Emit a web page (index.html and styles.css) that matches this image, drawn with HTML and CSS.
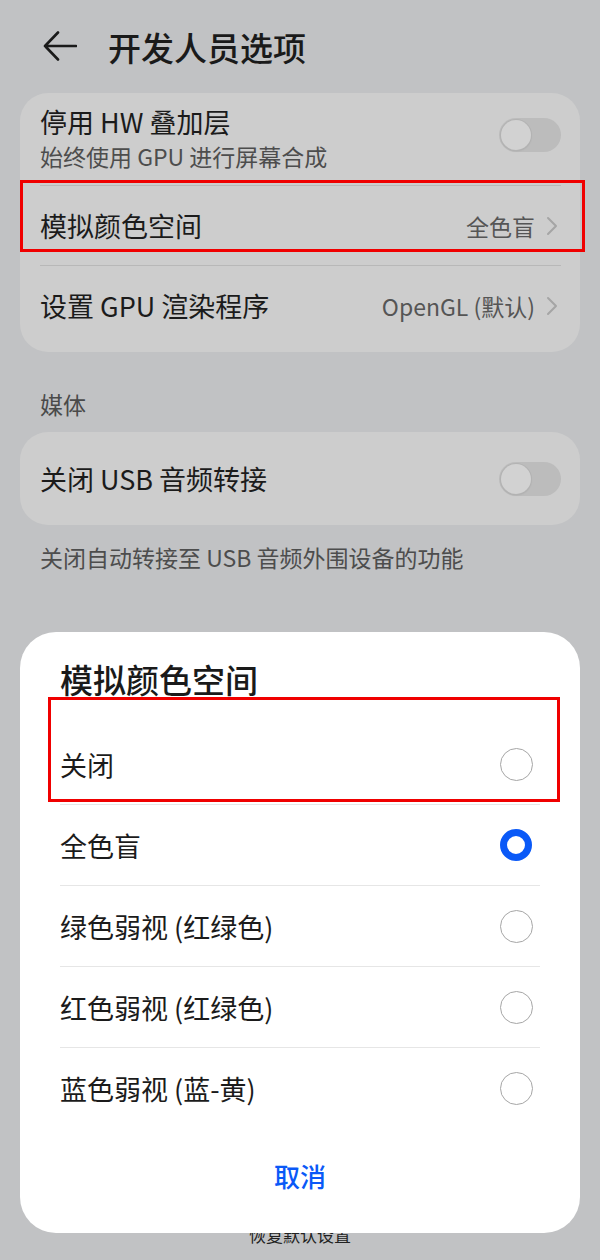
FILE: index.html
```html
<!DOCTYPE html>
<html lang="zh-CN">
<head>
<meta charset="utf-8">
<title>开发人员选项</title>
<link rel="stylesheet" href="styles.css">
</head>
<body>
<div class="screen">
  <header class="header">
    <svg class="back" width="34" height="30" viewBox="0 0 34 30"><path d="M33 15H2M15 1.5L2 15l13 13.5" fill="none" stroke="#1a1a1a" stroke-width="2.6" stroke-linecap="round" stroke-linejoin="round"/></svg>
    <h1 class="title">开发人员选项</h1>
  </header>

  <section class="card">
    <div class="row row-tall">
      <div class="texts">
        <div class="row-title">停用 HW 叠加层</div>
        <div class="row-sub">始终使用 GPU 进行屏幕合成</div>
      </div>
      <div class="toggle toggle-up"><span class="knob"></span></div>
    </div>
    <div class="row row-div">
      <div class="row-title">模拟颜色空间</div>
      <div class="value">全色盲<svg class="chev" width="12" height="20" viewBox="0 0 12 20"><path d="M2 2l8 8-8 8" fill="none" stroke="#a5a5a5" stroke-width="2" stroke-linecap="round" stroke-linejoin="round"/></svg></div>
    </div>
    <div class="row row-div">
      <div class="row-title">设置 GPU 渲染程序</div>
      <div class="value">OpenGL (默认)<svg class="chev" width="12" height="20" viewBox="0 0 12 20"><path d="M2 2l8 8-8 8" fill="none" stroke="#a5a5a5" stroke-width="2" stroke-linecap="round" stroke-linejoin="round"/></svg></div>
    </div>
  </section>

  <div class="section-label media-label">媒体</div>
  <section class="card card-single">
    <div class="row row-single">
      <div class="row-title">关闭 USB 音频转接</div>
      <div class="toggle"><span class="knob"></span></div>
    </div>
  </section>
  <div class="desc">关闭自动转接至 USB 音频外围设备的功能</div>

  <div class="section-label debug-label">调试</div>
  <section class="card card-hidden"></section>
  <div class="footer-link">恢复默认设置</div>

  <div class="mark mark-top"></div>

  <div class="dialog">
    <div class="dialog-title">模拟颜色空间</div>
    <div class="options">
      <div class="option"><span>关闭</span><span class="radio"></span></div>
      <div class="option"><span>全色盲</span><span class="radio on"></span></div>
      <div class="option"><span>绿色弱视 (红绿色)</span><span class="radio"></span></div>
      <div class="option"><span>红色弱视 (红绿色)</span><span class="radio"></span></div>
      <div class="option"><span>蓝色弱视 (蓝-黄)</span><span class="radio"></span></div>
    </div>
    <div class="cancel">取消</div>
  </div>

  <div class="mark mark-dialog"></div>
</div>
</body>
</html>
```

FILE: styles.css
```css
* { box-sizing: border-box; margin: 0; padding: 0; }
html, body { width: 600px; height: 1260px; }
body {
  background: #c1c2c4;
  font-family: "Noto Sans CJK SC", "Noto Sans", "Liberation Sans", sans-serif;
  color: #1b1b1b;
  overflow: hidden;
}
.screen { position: relative; width: 600px; height: 1260px; }

.header {
  height: 93px;
  display: flex;
  align-items: center;
  padding-left: 43px;
  gap: 31px;
}
.back { display: block; margin-top: -2px; }
.title { font-size: 33px; font-weight: 500; line-height: 40px; color: #1a1a1a; }

.card {
  margin: 0 20px;
  background: #cdcdcd;
  border-radius: 28px;
  padding: 0 19px 7px 20px;
}
.row {
  display: flex;
  align-items: center;
  justify-content: space-between;
  height: 80px;
}
.row-tall { height: 92px; padding: 10px 0 14px; }
.row-div { border-top: 1px solid #b8b8b8; }
.row-title { font-size: 27px; line-height: 34px; color: #1b1b1b; }
.row-sub { font-size: 23px; line-height: 28px; margin-top: 3px; color: #4d4d4d; }
.value {
  display: flex;
  align-items: center;
  gap: 11px;
  font-size: 23px;
  line-height: 30px;
  color: #555555;
  margin-right: 3px;
}
.chev { display: block; }

.toggle {
  width: 62px;
  height: 34px;
  border-radius: 17px;
  background: #bcbcbc;
  padding: 2px;
  flex: none;
}
.toggle-up { margin-bottom: 4px; }
.knob {
  display: block;
  width: 30px;
  height: 30px;
  border-radius: 50%;
  background: #d2d2d2;
  box-shadow: 0 0 0 1px #b3b3b3, 0 1px 2px rgba(0,0,0,0.12);
}

.section-label {
  font-size: 23px;
  line-height: 28px;
  color: #4a4a4a;
  padding-left: 40px;
}
.media-label { margin-top: 38px; margin-bottom: 14px; }
.card-single { padding: 0 19px 0 20px; }
.row-single { height: 93px; }
.desc {
  margin-top: 18px;
  padding-left: 40px;
  font-size: 23px;
  line-height: 28px;
  color: #4d4d4d;
}
.debug-label { margin-top: 59px; }
.card-hidden { margin-top: 14px; height: 516px; }
.footer-link {
  margin-top: 35px;
  text-align: center;
  font-size: 17px;
  line-height: 24px;
  color: #222222;
}

.dialog {
  position: absolute;
  left: 20px;
  top: 632px;
  width: 560px;
  height: 601px;
  background: #ffffff;
  border-radius: 36px;
  padding: 26px 40px 0;
}
.dialog-title { font-size: 33px; font-weight: 500; line-height: 42px; color: #1a1a1a; }
.options { margin-top: 24px; }
.option {
  height: 81px;
  display: flex;
  align-items: center;
  justify-content: space-between;
  border-bottom: 1px solid #e6e6e6;
  font-size: 27px;
  color: #1b1b1b;
  padding-right: 7px;
}
.option:last-child { border-bottom: none; height: 80px; }
.radio {
  width: 33px;
  height: 33px;
  border-radius: 50%;
  border: 1.5px solid #a6a6a6;
  flex: none;
}
.radio.on { width: 32px; height: 32px; border: 7px solid #0a59f7; margin-right: 1px; }
.cancel {
  margin-top: 28px;
  text-align: center;
  font-size: 26px;
  line-height: 40px;
  font-weight: 500;
  color: #0a59f7;
}

.mark {
  position: absolute;
  border: 3px solid #f00000;
}
.mark-top { left: 20px; top: 180px; width: 565px; height: 72px; }
.mark-dialog { left: 48px; top: 697px; width: 512px; height: 105px; }
```
